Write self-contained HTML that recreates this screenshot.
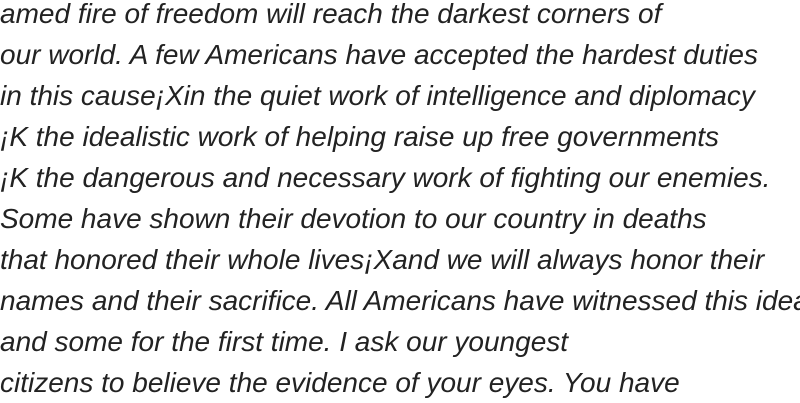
<!DOCTYPE html>
<html><head><meta charset="utf-8"><style>
html,body{margin:0;padding:0;background:#fff;width:800px;height:400px;overflow:hidden}
.t{position:absolute;left:0;top:-7px;font-family:"Liberation Sans",sans-serif;font-style:italic;font-size:28px;line-height:41px;color:#222;white-space:nowrap}
</style></head><body><div class="t">
amed fire of freedom will reach the darkest corners of<br>
our world. A few Americans have accepted the hardest duties<br>
in this cause¡Xin the quiet work of intelligence and diplomacy<br>
¡K the idealistic work of helping raise up free governments<br>
¡K the dangerous and necessary work of fighting our enemies.<br>
Some have shown their devotion to our country in deaths<br>
that honored their whole lives¡Xand we will always honor their<br>
names and their sacrifice. All Americans have witnessed this idea<br>
and some for the first time. I ask our youngest<br>
citizens to believe the evidence of your eyes. You have
</div></body></html>
